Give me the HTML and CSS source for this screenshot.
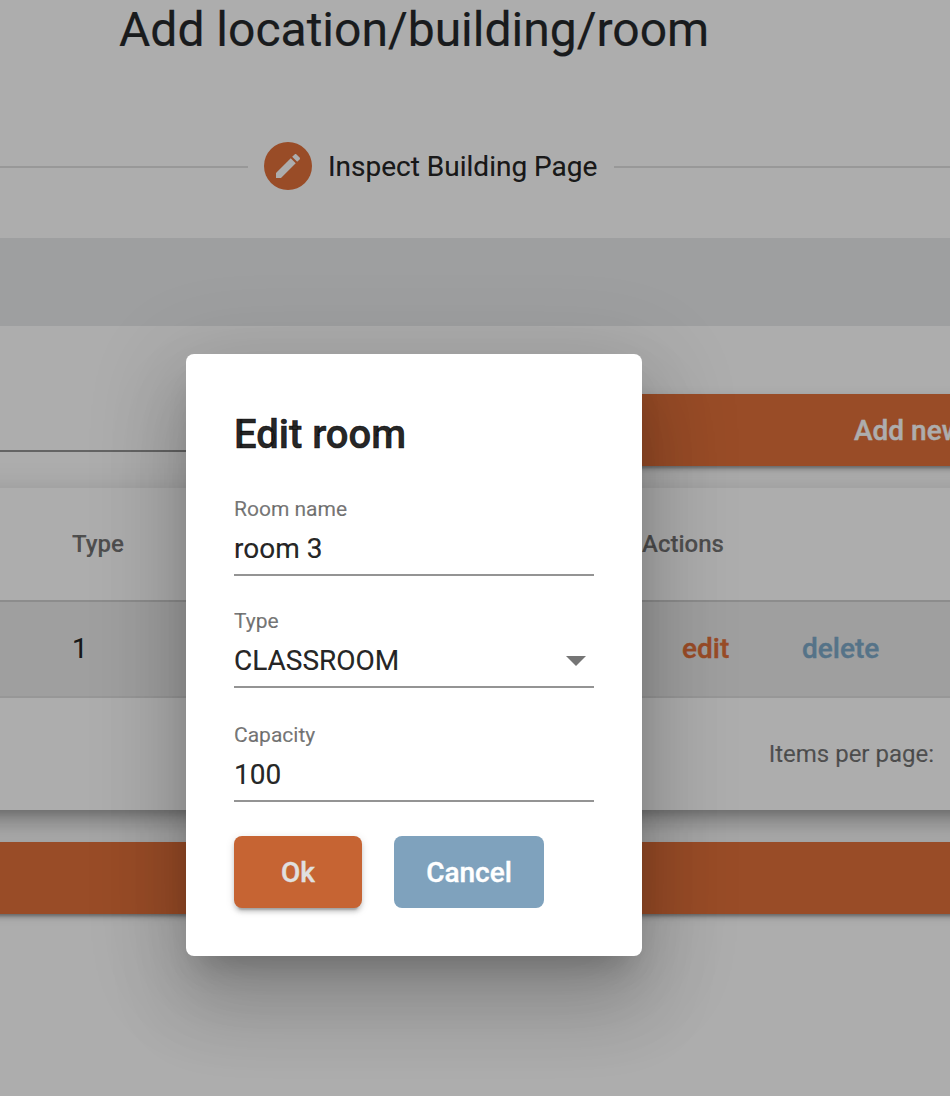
FILE: index.html
```html
<!DOCTYPE html>
<html lang="en">
<head>
<meta charset="utf-8">
<title>Add location/building/room</title>
<link rel="stylesheet" href="styles.css">
</head>
<body>
<main class="page">
  <h1 class="page-title">Add location/building/room</h1>
  <div class="stepper">
    <span class="step-line step-line-before"></span>
    <span class="step-icon">
      <svg viewBox="0 0 24 24" width="32" height="32"><path fill="#fff" d="M3 17.25V21h3.75L17.81 9.94l-3.75-3.75L3 17.25zM20.71 7.04c.39-.39.39-1.02 0-1.41l-2.34-2.34c-.39-.39-1.02-.39-1.41 0l-1.83 1.83 3.75 3.75 1.83-1.83z"/></svg>
    </span>
    <span class="step-label">Inspect Building Page</span>
    <span class="step-line step-line-after"></span>
  </div>
  <div class="band"></div>
  <div class="toolbar">
    <div class="filter"></div>
    <div class="add-button">Add new</div>
  </div>
  <section class="table">
    <div class="row head"><span class="col-type">Type</span><span>Actions</span></div>
    <div class="row item"><span class="col-type">1</span><span class="actions"><b class="edit">edit</b><b class="delete">delete</b></span></div>
    <div class="paginator">Items per page:</div>
  </section>
  <div class="footer-button"></div>
</main>
<div class="backdrop">
  <div class="dialog">
    <h2 class="dialog-title">Edit room</h2>
    <div class="field">
      <span class="label">Room name</span>
      <span class="value">room 3</span>
    </div>
    <div class="field field-select">
      <span class="label">Type</span>
      <span class="value">CLASSROOM<i class="arrow"></i></span>
    </div>
    <div class="field">
      <span class="label">Capacity</span>
      <span class="value">100</span>
    </div>
    <div class="buttons">
      <button class="btn ok">Ok</button>
      <button class="btn cancel">Cancel</button>
    </div>
  </div>
</div>
</body>
</html>
```
FILE: styles.css
```css
* { box-sizing: border-box; }
body {
  margin: 0;
  width: 950px;
  height: 1096px;
  overflow: hidden;
  background: #fff;
  color: rgba(0, 0, 0, .87);
  font-family: Roboto, sans-serif;
  font-size: 28px;
  -webkit-text-stroke: .2px;
}
.page { height: 1096px; overflow: hidden; }
.page-title {
  margin: 0;
  height: 94px;
  padding-left: 119px;
  font-size: 48px;
  line-height: 59px;
  font-weight: 400;
  color: #25282b;
  white-space: nowrap;
}
.stepper { display: flex; align-items: center; height: 144px; }
.step-line { height: 2px; margin-top: 2px; background: #e0e0e0; }
.step-line-before { width: 248px; margin-right: 16px; }
.step-line-after { flex: 1; margin-left: 17px; }
.step-icon {
  display: flex;
  align-items: center;
  justify-content: center;
  width: 48px;
  height: 48px;
  margin-right: 16px;
  border-radius: 50%;
  background: #e2703a;
}
.step-label { white-space: nowrap; }
.band { height: 88px; background: #e9eaec; }
.toolbar { display: flex; height: 162px; padding-top: 68px; }
.filter { flex: none; width: 554px; height: 58px; margin-right: 32px; border-bottom: 2px solid #949494; }
.add-button {
  flex: none;
  width: 600px;
  height: 72px;
  padding-left: 268px;
  white-space: nowrap;
  background: #e2703a;
  color: #fff;
  font-weight: 500;
  line-height: 74px;
  -webkit-text-stroke: .4px;
  box-shadow: 0 6px 2px -4px rgba(0,0,0,.2), 0 4px 4px rgba(0,0,0,.14), 0 2px 10px rgba(0,0,0,.12);
}
.table {
  height: 322px;
  margin: 0 -48px;
  padding: 0 48px;
  background: #fff;
  box-shadow: 0 10px 10px -6px rgba(0,0,0,.2), 0 16px 20px 2px rgba(0,0,0,.14), 0 6px 28px 4px rgba(0,0,0,.12);
}
.row { display: flex; align-items: center; }
.col-type { width: 570px; margin-left: 72px; }
.head {
  height: 114px;
  border-bottom: 2px solid #cfcfcf;
  font-size: 24px;
  font-weight: 500;
  color: rgba(0, 0, 0, .54);
}
.item { height: 96px; padding-bottom: 2px; background: #ebebeb; border-bottom: 2px solid #dfdfdf; }
.actions { display: flex; padding-left: 40px; }
.actions b { font-weight: 500; -webkit-text-stroke: .4px; }
.edit { width: 120px; color: #e2703a; }
.delete { color: #7eaac9; }
.paginator {
  height: 112px;
  padding-right: 16px;
  text-align: right;
  font-size: 24px;
  line-height: 112px;
  color: rgba(0, 0, 0, .54);
}
.footer-button {
  height: 72px;
  margin: 32px -48px 0;
  position: relative;
  background: #e2703a;
  box-shadow: 0 6px 2px -4px rgba(0,0,0,.2), 0 4px 4px rgba(0,0,0,.14), 0 2px 10px rgba(0,0,0,.12);
}
.backdrop {
  position: absolute;
  inset: 0;
  padding: 354px 0 0 186px;
  background: rgba(0, 0, 0, .32);
}
.dialog {
  width: 456px;
  height: 602px;
  padding: 48px;
  border-radius: 8px;
  background: #fff;
  box-shadow: 0 22px 30px -14px rgba(0,0,0,.2), 0 48px 76px 6px rgba(0,0,0,.14), 0 18px 92px 16px rgba(0,0,0,.12);
}
.dialog-title {
  margin: 0 0 26px;
  font-size: 40px;
  line-height: 66px;
  font-weight: 500;
  -webkit-text-stroke: .6px;
}
.field { height: 82px; margin-bottom: 32px; border-bottom: 2px solid #949494; }
.field:first-of-type { margin-bottom: 30px; }
.label { display: block; font-size: 21px; line-height: 30px; color: rgba(0, 0, 0, .54); }
.value { display: flex; align-items: center; justify-content: space-between; line-height: 32px; padding-top: 9px; }
.arrow {
  margin-right: 8px;
  border: 10px solid transparent;
  border-bottom: 0;
  border-top-color: #757575;
}
.buttons { display: flex; gap: 32px; padding-top: 2px; }
.btn {
  width: 128px;
  height: 72px;
  padding: 0;
  border: 0;
  border-radius: 8px;
  font: 500 28px Roboto, sans-serif;
  -webkit-text-stroke: .4px;
}
.ok {
  background: #c66433;
  color: #e0e0e0;
  box-shadow: 0 6px 2px -4px rgba(0,0,0,.2), 0 4px 4px rgba(0,0,0,.14), 0 2px 10px rgba(0,0,0,.12);
}
.cancel { width: 150px; background: #7fa2bd; color: #fff; }
```
